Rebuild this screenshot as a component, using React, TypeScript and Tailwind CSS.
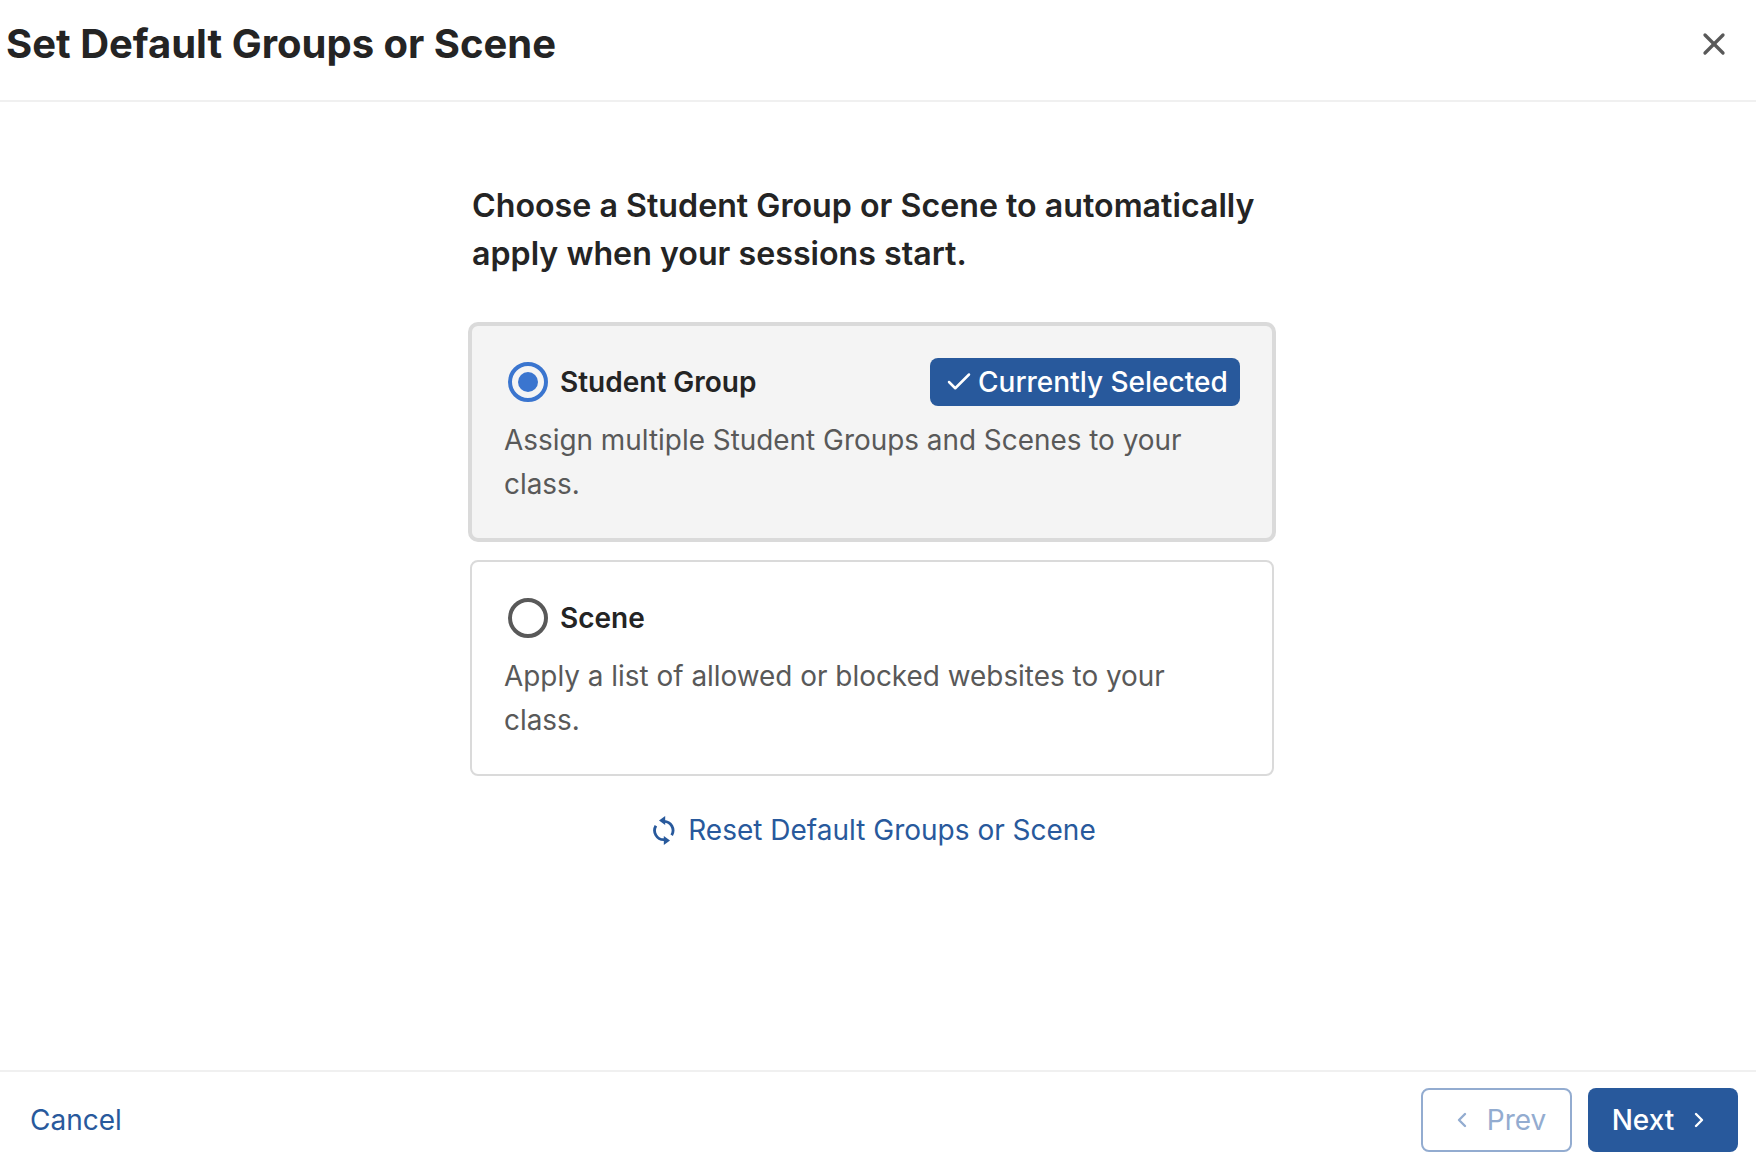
import { Check, ChevronLeft, ChevronRight, X } from 'lucide-react'

function Radio({ selected }: { selected?: boolean }) {
  if (selected) {
    return (
      <span className="ml-[3px] flex h-10 w-10 shrink-0 items-center justify-center rounded-full border-4 border-[#3a75cf]">
        <span className="h-5 w-5 rounded-full bg-[#3a75cf]" />
      </span>
    )
  }
  return <span className="ml-[3px] h-10 w-10 shrink-0 rounded-full border-4 border-[#595959]" />
}

function SyncIcon() {
  return (
    <svg width="22" height="29" viewBox="0 0 22 29" fill="none" className="shrink-0">
      <path d="M11 5.3A9.2 9.2 0 0 1 18.7 19.2" stroke="currentColor" strokeWidth="2.8" />
      <path d="M11 23.7A9.2 9.2 0 0 1 2.9 9.8" stroke="currentColor" strokeWidth="2.8" />
      <path d="M12.2 0L12.2 9L6 4.5Z" fill="currentColor" />
      <path d="M10.8 20L10.8 29L17 24.5Z" fill="currentColor" />
    </svg>
  )
}

export default function App() {
  return (
    <div className="flex h-[1160px] flex-col bg-white font-['Inter',sans-serif] text-[#242424]">
      <header className="flex h-[102px] shrink-0 items-center justify-between border-b-2 border-[#f0f0f0] pb-[13px] pl-[6px] pr-[24px]">
        <h1 className="text-[40px] font-bold leading-[48px]">Set Default Groups or Scene</h1>
        <button className="text-[#595959]">
          <X size={36} strokeWidth={2.2} />
        </button>
      </header>

      <main className="flex flex-1 flex-col items-center pr-[12px] pt-[80px]">
        <div className="w-[804px]">
          <h2 className="pl-[2px] text-[32.2px] font-semibold leading-[48px]">
            Choose a Student Group or Scene to automatically
            <br />
            apply when your sessions start.
          </h2>

          <div className="mt-[46px] h-[216px] rounded-lg border-2 border-[#dadada] bg-[#f4f4f4] px-[33px] pt-[32px] ring-2 ring-[#dadada]">
            <div className="flex h-[48px] items-center justify-between">
              <div className="flex items-center gap-3">
                <Radio selected />
                <span className="text-[28px] font-semibold">Student Group</span>
              </div>
              <span className="-mr-[1px] flex h-[48px] w-[310px] items-center rounded-lg bg-[#28599c] pl-[15px] text-[28px] font-medium text-white">
                <Check size={30} strokeWidth={2} className="mr-[3px] -translate-x-[1px]" />
                Currently Selected
              </span>
            </div>
            <p className="mt-[12px] -ml-[1px] text-[27.9px] leading-[44px] text-[#595959]">
              Assign multiple Student Groups and Scenes to your class.
            </p>
          </div>

          <div className="mt-[20px] h-[216px] rounded-lg border-2 border-[#dadada] bg-white px-[33px] pt-[32px]">
            <div className="flex h-[48px] items-center gap-3">
              <Radio />
              <span className="text-[28px] font-semibold">Scene</span>
            </div>
            <p className="mt-[12px] -ml-[1px] text-[27.9px] leading-[44px] text-[#595959]">
              Apply a list of allowed or blocked websites to your class.
            </p>
          </div>

          <a className="mt-[34px] flex items-center justify-center gap-[13px] pl-[5px] text-[28px] leading-[40px] text-[#28599c]">
            <SyncIcon />
            Reset Default Groups or Scene
          </a>
        </div>
      </main>

      <footer className="flex h-[90px] shrink-0 items-center justify-between border-t-2 border-[#f0f0f0] pl-[30px] pr-[18px] pt-[8px]">
        <a className="text-[28px] text-[#28599c]">Cancel</a>
        <div className="flex items-center gap-4">
          <button className="flex h-[64px] w-[151px] items-center justify-center gap-[13px] rounded-lg border-2 border-[#93acd0] pl-[3px] text-[28px] text-[#93acd0]">
            <ChevronLeft size={24} strokeWidth={2.4} />
            Prev
          </button>
          <button className="flex h-[64px] w-[150px] items-center justify-center gap-[13px] rounded-lg bg-[#28599c] pr-[3px] text-[28px] font-medium text-white">
            Next
            <ChevronRight size={24} strokeWidth={2.4} />
          </button>
        </div>
      </footer>
    </div>
  )
}
